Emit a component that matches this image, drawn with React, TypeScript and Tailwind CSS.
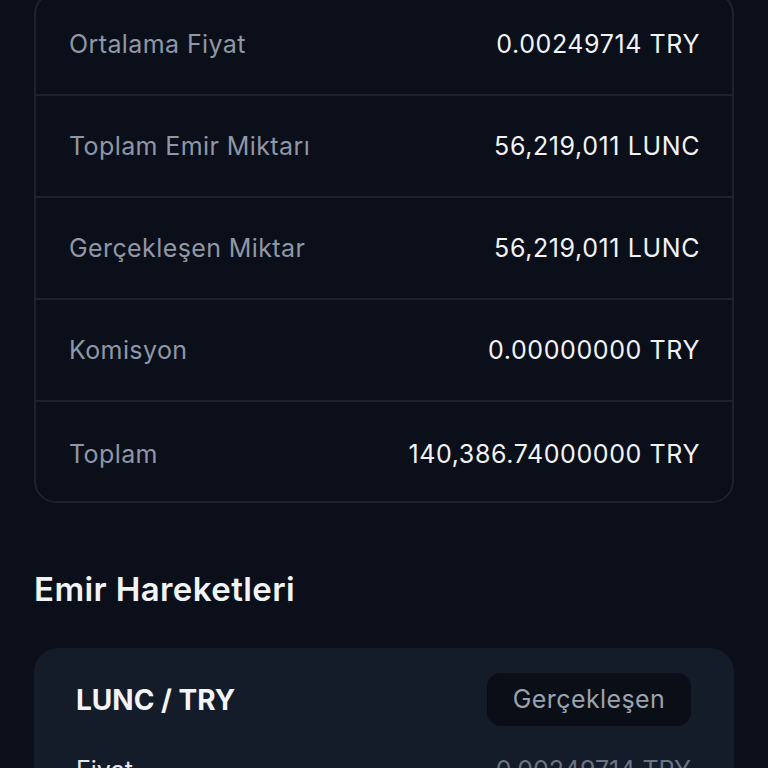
import React from "react";

const rows = [
  ["Ortalama Fiyat", "0.00249714 TRY"],
  ["Toplam Emir Miktarı", "56,219,011 LUNC"],
  ["Gerçekleşen Miktar", "56,219,011 LUNC"],
  ["Komisyon", "0.00000000 TRY"],
  ["Toplam", "140,386.74000000 TRY"],
];

export default function App() {
  return (
    <div
      className="w-[768px] h-[768px] overflow-hidden bg-[#0b0f19]"
      style={{ fontFamily: "Inter, 'Noto Sans', sans-serif" }}
    >
      <div className="-mt-[8px] px-[34px]">
        <div className="rounded-[22px] border-2 border-[#1b2230] overflow-hidden">
          {rows.map(([k, v], i) => (
            <div
              key={k}
              className={
                "flex items-center justify-between pl-[33px] pr-[32px] " +
                (i < rows.length - 1 ? "h-[102px] pt-[2px] border-b-2 border-[#1b2230]" : "h-[99px] pt-[7px]")
              }
            >
              <span className="text-[25px] tracking-[0.4px] text-[#8f97a6]">{k}</span>
              <span className="text-[25px] tracking-[0.6px] text-[#f1f3f6]">{v}</span>
            </div>
          ))}
        </div>
        <h2 className="mt-[66px] text-[33px] tracking-[0.4px] font-semibold text-[#f1f3f6] leading-[40px]">
          Emir Hareketleri
        </h2>
        <div className="mt-[39px] rounded-[24px] bg-[#141c29] pl-[42px] pr-[43px] pt-[25px] h-[200px]">
          <div className="flex items-center justify-between">
            <span className="text-[28px] font-bold text-[#f3f4f6] tracking-[0px]">LUNC / TRY</span>
            <span className="flex items-center justify-center w-[204px] h-[53px] rounded-[14px] bg-[#0a0e17] text-[25px] tracking-[0.4px] text-[#9ba2af]">
              Gerçekleşen
            </span>
          </div>
          <div className="mt-[26px] flex items-center justify-between">
            <span className="text-[25px] text-[#e5e7eb]">Fiyat</span>
            <span className="text-[25px] text-[#6b7280]">0.00249714 TRY</span>
          </div>
        </div>
      </div>
    </div>
  );
}
